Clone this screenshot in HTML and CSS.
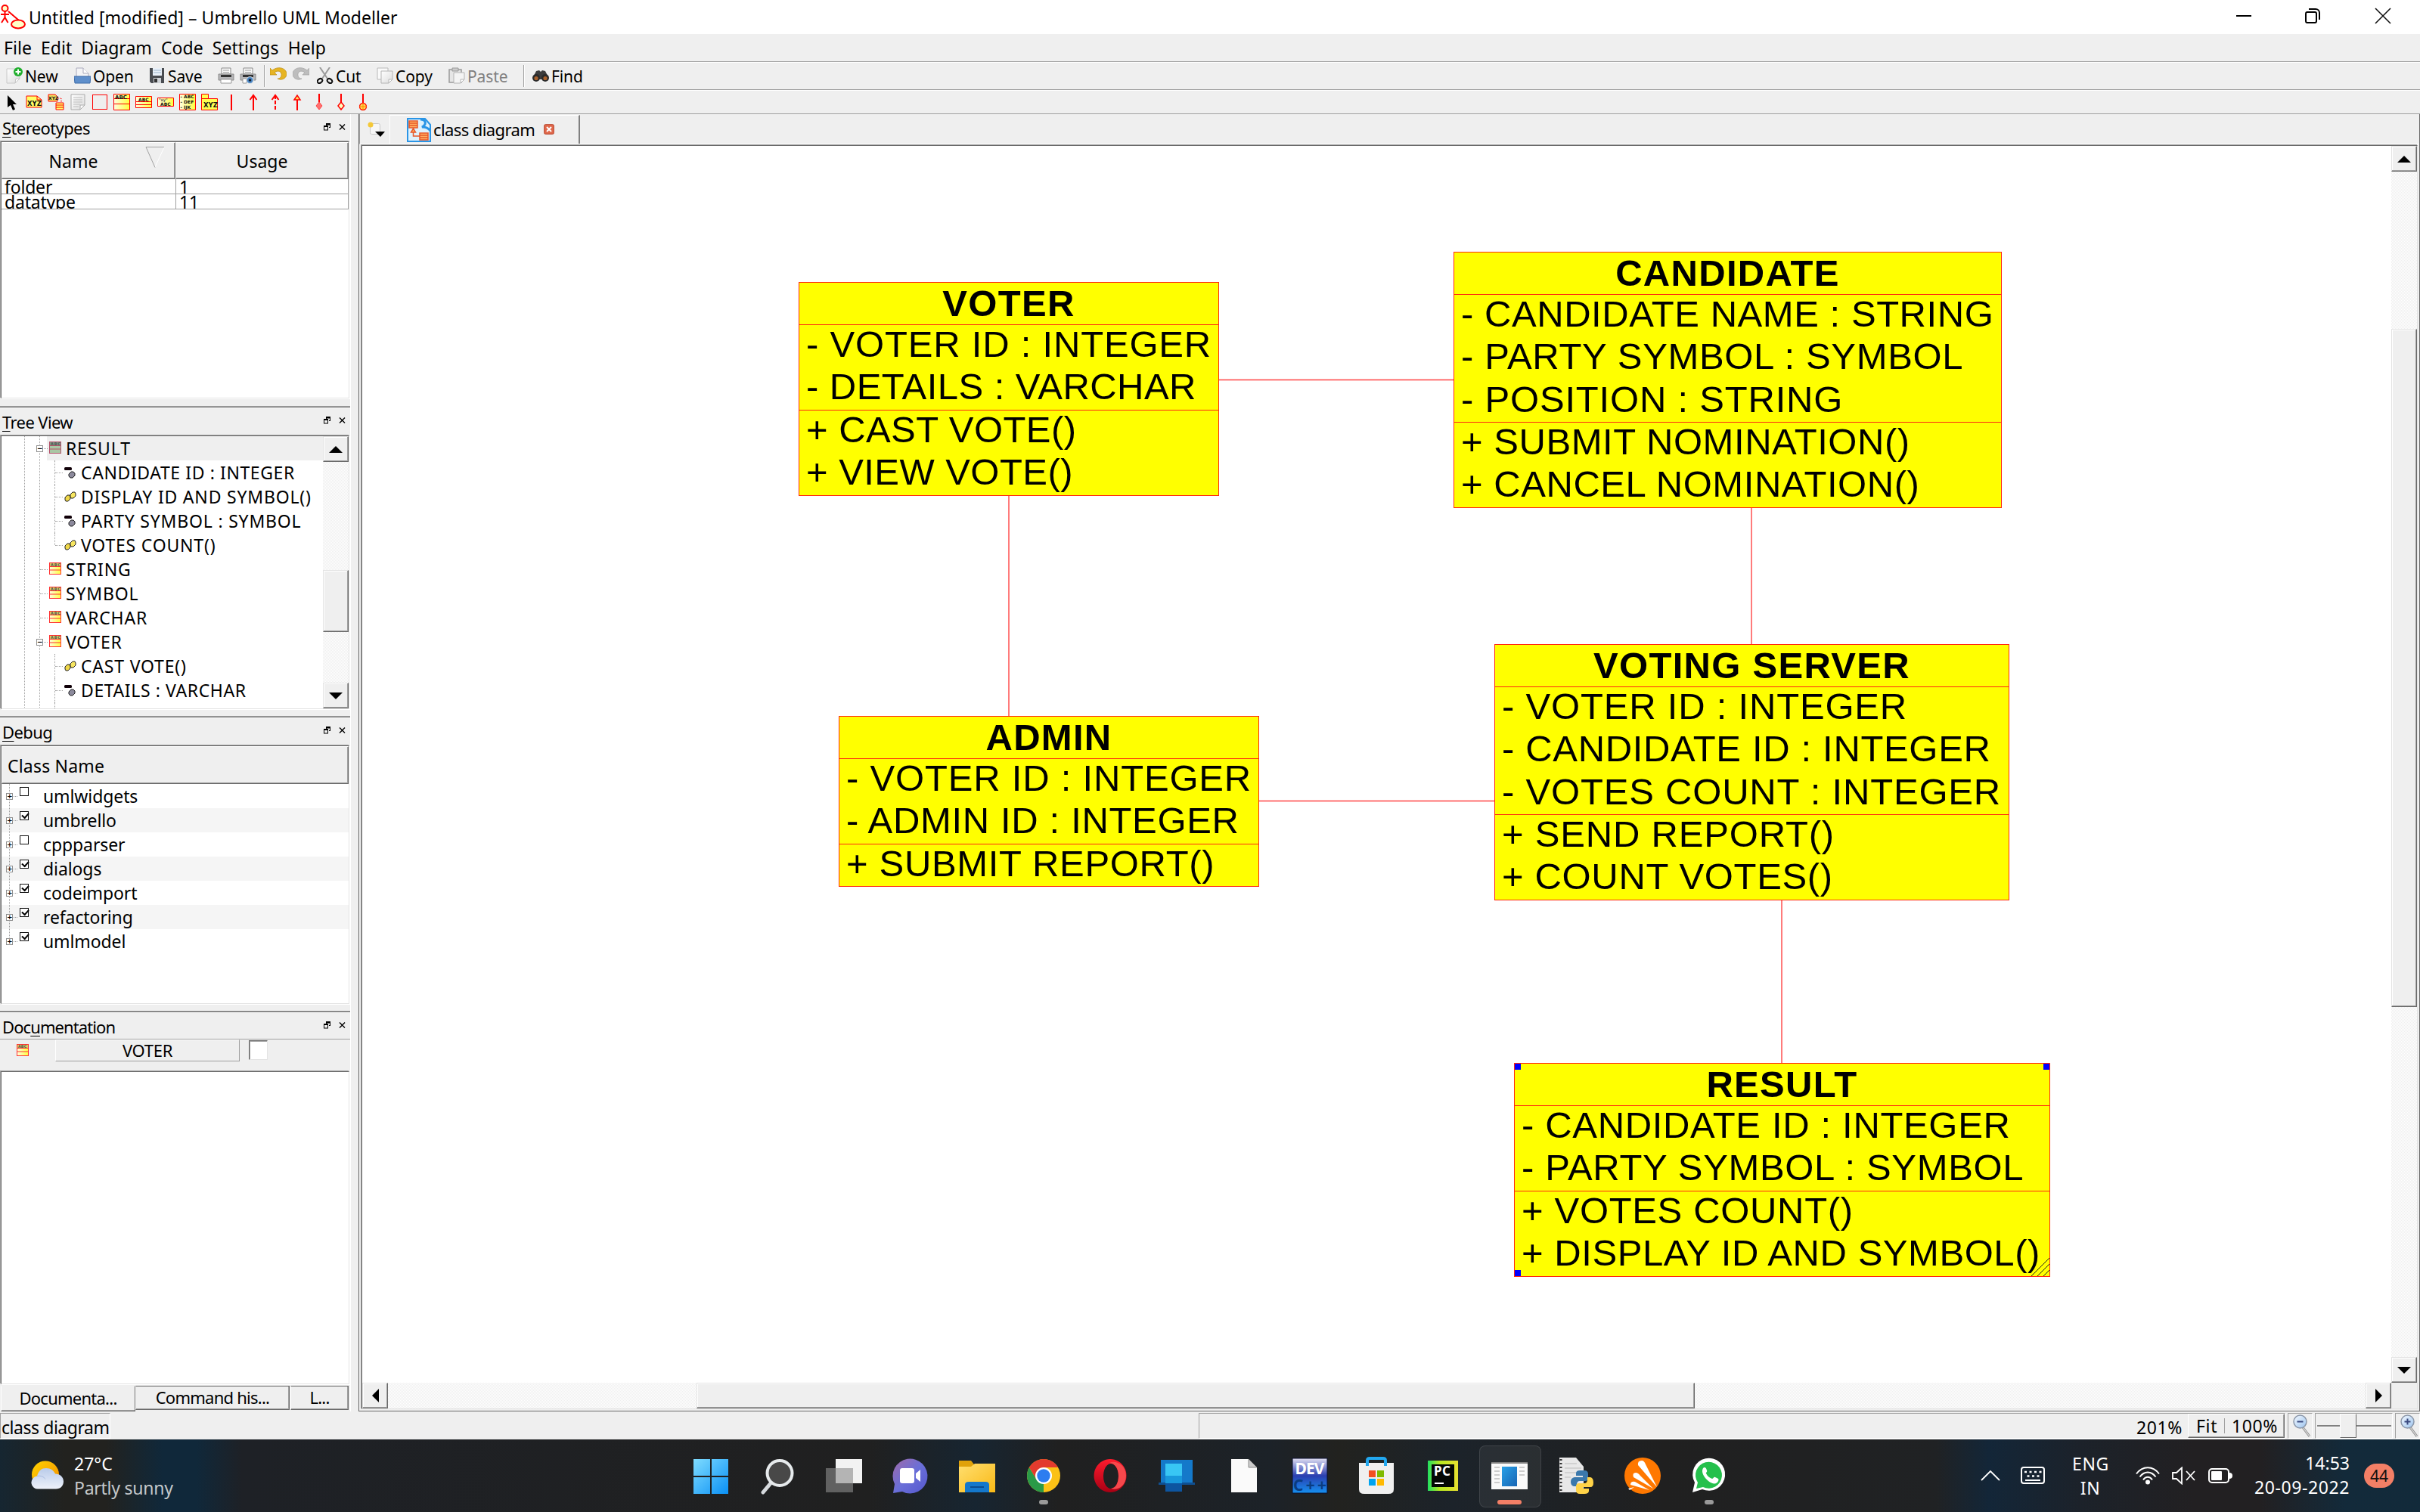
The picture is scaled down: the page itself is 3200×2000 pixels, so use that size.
FILE: index.html
```html
<!DOCTYPE html>
<html lang="en">
<head>
<meta charset="utf-8">
<title>Untitled [modified] – Umbrello UML Modeller</title>
<link rel="stylesheet" href="styles.css">
</head>
<body>
<svg class="defs" width="0" height="0">
  <defs>
    <linearGradient id="gYel" x1="0" y1="0" x2="1" y2="0"><stop offset="0" stop-color="#fffde0"/><stop offset="1" stop-color="#ffff3c"/></linearGradient>
    <linearGradient id="gPage" x1="0" y1="0" x2="1" y2="1"><stop offset="0" stop-color="#fff"/><stop offset="1" stop-color="#dcdcdc"/></linearGradient>
    <linearGradient id="gBlue" x1="0" y1="0" x2="1" y2="1"><stop offset="0" stop-color="#7fdcff"/><stop offset="1" stop-color="#0a90f5"/></linearGradient>
    <linearGradient id="gChat" x1="0" y1="0" x2="1" y2="1"><stop offset="0" stop-color="#a06aa8"/><stop offset=".5" stop-color="#6a6fd8"/><stop offset="1" stop-color="#5558cf"/></linearGradient>
    <linearGradient id="gFolder" x1="0" y1="0" x2="1" y2="1"><stop offset="0" stop-color="#ffdf70"/><stop offset="1" stop-color="#f9b916"/></linearGradient>
    <linearGradient id="gOpera" x1="0" y1="0" x2="0" y2="1"><stop offset="0" stop-color="#ff1b2d"/><stop offset="1" stop-color="#a70014"/></linearGradient>
    <linearGradient id="gDev" x1="0" y1="0" x2="0" y2="1"><stop offset="0" stop-color="#e0dff2"/><stop offset=".5" stop-color="#2b3fb0"/><stop offset="1" stop-color="#1590f0"/></linearGradient>
    <linearGradient id="gPc" x1="0" y1="0" x2="1" y2="0"><stop offset="0" stop-color="#20e060"/><stop offset=".4" stop-color="#b8e820"/><stop offset="1" stop-color="#e8e030"/></linearGradient>
    <linearGradient id="gWin" x1="0" y1="0" x2="1" y2="1"><stop offset="0" stop-color="#1c9be6"/><stop offset="1" stop-color="#0a5cb0"/></linearGradient>
    <linearGradient id="gSun" x1="0" y1="0" x2="1" y2="1"><stop offset="0" stop-color="#ffd400"/><stop offset="1" stop-color="#f28a00"/></linearGradient>
    <linearGradient id="gCloud" x1="0" y1="0" x2="0" y2="1"><stop offset="0" stop-color="#b9cbea"/><stop offset="1" stop-color="#eef2fa"/></linearGradient>
    <linearGradient id="gLens" x1="0" y1="0" x2="1" y2="1"><stop offset="0" stop-color="#f4f9ff"/><stop offset="1" stop-color="#9cc4ee"/></linearGradient>
  </defs>
  <symbol id="class" viewBox="0 0 16 16"><rect x=".5" y=".5" width="15" height="15" fill="url(#gYel)" stroke="#f33" /><rect x="1" y="1" width="14" height="4" fill="#d9cf60"/><text x="2" y="5" class="t5">ABC</text><path d="M0 5.5h16M0 10h16" stroke="#f33"/></symbol>
  <symbol id="class-sel" viewBox="0 0 16 16"><rect x=".5" y=".5" width="15" height="15" fill="#a9c7a4" stroke="#b4536b"/><rect x="1" y="1" width="14" height="4" fill="#7d9a86"/><text x="2" y="5" class="t5">ABC</text><path d="M0 5.5h16M0 10h16" stroke="#b4536b"/></symbol>
  <symbol id="attr" viewBox="0 0 16 16"><rect x="0" y="1" width="10" height="4" rx="1.5" fill="#100008"/><path d="M6 10l3-3h3l2 2v3l-3 3H8l-2-2z" fill="#8c8a9c" stroke="#222"/></symbol>
  <symbol id="op" viewBox="0 0 16 16"><path d="M1 9l3-3h3l1 2v3l-3 3H2l-1-2z" fill="#f0d84a" stroke="#222"/><path d="M8 5l3-3h3l1 2v3l-3 3H9L8 8z" fill="#f7e660" stroke="#222"/></symbol>
  <symbol id="float" viewBox="0 0 9 10"><path d="M3 0h6v6H7V5h1V2.500H4V3H3zM0 3h6v6.500H0zM1 5v3.500h4V5z" fill="#000" fill-rule="evenodd"/></symbol>
  <symbol id="x" viewBox="0 0 9 9"><path d="M1 1l7 7M8 1L1 8" stroke="#000" stroke-width="1.4"/></symbol>
</svg>

<div class="window">
  <header class="titlebar">
    <svg class="app" viewBox="0 0 34 34"><g fill="none" stroke="#f00" stroke-width="2"><circle cx="5.500" cy="5" r="4" fill="#ffffc8"/><path d="M5.500 9v9M0 13h11M5.500 17L1 24M5.500 17l4 7M10 9l14 12"/><ellipse cx="23" cy="26" rx="9" ry="5.500" fill="#ffffc8"/></g></svg>
    <h1>Untitled [modified] – Umbrello UML Modeller</h1>
    <svg class="winbtn min" viewBox="0 0 20 20"><path d="M0 10h20" stroke="#000" stroke-width="2"/></svg>
    <svg class="winbtn max" viewBox="0 0 20 20"><g fill="none" stroke="#000" stroke-width="2"><rect x="1" y="5" width="14" height="14" rx="2"/><path d="M5 1h9a5 5 0 0 1 5 5v9"/></g></svg>
    <svg class="winbtn" viewBox="0 0 20 20"><path d="M0 0l20 20M20 0L0 20" stroke="#111" stroke-width="1.600"/></svg>
  </header>
  <nav class="menu"><span>File</span><span>Edit</span><span>Diagram</span><span>Code</span><span>Settings</span><span>Help</span></nav>

  <div class="toolbar main">
    <div class="tool"><svg viewBox="0 0 22 22"><path d="M1 2h17v13l-6 6H1z" fill="url(#gPage)" stroke="#c8c8c8"/><path d="M12 21l1-6h5z" fill="#fff" stroke="#c4c4c4"/><circle cx="16" cy="6" r="6" fill="#1fae2c"/><path d="M16 2.500v7M12.500 6h7" stroke="#fff" stroke-width="2"/></svg><span>New</span></div>
    <div class="tool"><svg viewBox="0 0 22 22"><path d="M3 1h9l7 7v6H3z" fill="#f4f4f6" stroke="#aab"/><path d="M12 1v7h7" fill="#fff" stroke="#aab"/><path d="M0 12h22l-1 9H1z" fill="#5f8fcb" stroke="#3d6ba8"/></svg><span>Open</span></div>
    <div class="tool"><svg viewBox="0 0 22 22"><path d="M1 1h19v20H3l-2-2z" fill="#4a4d52" /><path d="M5 1h12v10H5z" fill="#e9f0f8"/><path d="M6 4h10M6 7h10" stroke="#9bb4cc"/><path d="M6 14h10v7H6z" fill="#cfd2d6"/><path d="M7 15h4v5H7z" fill="#333"/></svg><span>Save</span></div>
    <div class="tool"><svg viewBox="0 0 22 22"><path d="M5 1h12v8H5z" fill="#fafafa" stroke="#888"/><path d="M7 4h8M7 6.500h8" stroke="#999"/><path d="M1 9h20v8H1z" fill="#b6b6b8" stroke="#8a8a8a"/><path d="M4 10h14v3H4z" fill="#333"/><path d="M4 16h14v5H4z" fill="#fff" stroke="#999"/></svg></div>
    <div class="tool"><svg viewBox="0 0 22 22"><path d="M5 1h12v8H5z" fill="#fafafa" stroke="#888"/><path d="M7 4h8M7 6.500h8" stroke="#999"/><path d="M1 9h20v8H1z" fill="#b6b6b8" stroke="#8a8a8a"/><path d="M4 10h14v3H4z" fill="#333"/><path d="M4 15h5v6H4z" fill="#fff" stroke="#999"/><circle cx="13.500" cy="17" r="4.500" fill="#4b86c4" stroke="#e8e8e8"/><circle cx="13.500" cy="17" r="1.800" fill="#123"/></svg></div>
    <i class="sep"></i>
    <div class="tool"><svg viewBox="0 0 22 22"><path d="M0 1v9h9L6 7c5-4 10-1 9 4-.4 3-3 4-5 4 5 3 11 0 12-5C23 2 12-3 3 4z" fill="#e6b422" stroke="#b98a10" stroke-width=".7"/></svg></div>
    <div class="tool"><svg viewBox="0 0 22 22"><path d="M22 1v9h-9l3-3C11 3 6 6 7 11c.4 3 3 4 5 4-5 3-11 0-12-5C-1 2 10-3 19 4z" fill="#bdbdbd" stroke="#a0a0a0" stroke-width=".7"/></svg></div>
    <div class="tool"><svg viewBox="0 0 22 22"><path d="M4 0l10 15M17 0L7 15" stroke="#9a9a9a" stroke-width="2"/><g fill="none" stroke="#111" stroke-width="2"><ellipse cx="4" cy="18" rx="3.500" ry="2.600" transform="rotate(-35 4 18)"/><ellipse cx="17" cy="18" rx="3.500" ry="2.600" transform="rotate(35 17 18)"/></g></svg><span>Cut</span></div>
    <div class="tool"><svg viewBox="0 0 22 22"><path d="M1 1h14v15H1z" fill="#fafafa" stroke="#b8b8b8"/><path d="M6 5h15v11l-5 5H6z" fill="url(#gPage)" stroke="#b4b4b4"/><path d="M16 21v-5h5z" fill="#fff" stroke="#b4b4b4"/></svg><span>Copy</span></div>
    <div class="tool off"><svg viewBox="0 0 22 22"><path d="M1 3h16v17H1z" fill="#e6e6e6" stroke="#9a9a9a" stroke-width="1.500"/><path d="M5 1h8v4H5z" fill="#ccc" stroke="#999"/><path d="M7 7h14v9l-5 5H7z" fill="#f4f4f4" stroke="#b4b4b4"/><path d="M16 21v-5h5z" fill="#fff" stroke="#b4b4b4"/></svg><span>Paste</span></div>
    <i class="sep"></i>
    <div class="tool"><svg viewBox="0 0 22 22"><path d="M5 5l4-1 2 2 2-2 4 1 4 8v3H1v-3z" fill="#3c3c3c"/><circle cx="5" cy="14" r="5" fill="#2b2b2b"/><circle cx="17" cy="14" r="5" fill="#2b2b2b"/><circle cx="5" cy="14.500" r="2.600" fill="#a8612c"/><circle cx="17" cy="14.500" r="2.600" fill="#a8612c"/></svg><span>Find</span></div>
  </div>

  <div class="toolbar shapes">
    <svg viewBox="0 0 22 22"><path d="M5 2v16l4-3 3 7 3-1.500-3-6.500h5z" fill="#000"/></svg>
    <svg viewBox="0 0 22 22"><path d="M1 3h14l6 5v10H1z" fill="#ffff66" stroke="#f00"/><path d="M15 3v5h6" fill="none" stroke="#f00"/><text x="2" y="16" class="t8">XYZ</text></svg>
    <svg viewBox="0 0 22 22"><path d="M1 1h9l3 3v6H1z" fill="#f0e060" stroke="#f00"/><text x="1" y="8" class="t6">XYZ</text><path d="M14 6h4v6" fill="none" stroke="#f00" stroke-dasharray="1 1"/><path d="M11 12h10v9H11zM11 15h10M11 18h10" fill="#ffff66" stroke="#f00"/></svg>
    <svg viewBox="0 0 22 22"><path d="M2 1h18v14l-6 6H2z" fill="url(#gPage)" stroke="#aaa"/><path d="M5 5h12M5 8h12M5 11h12M5 14h9M5 17h7" stroke="#bbb"/><path d="M14 21v-6h6z" fill="#fff" stroke="#aaa"/></svg>
    <svg viewBox="0 0 22 22"><rect x="1.500" y="1.500" width="19" height="19" fill="none" stroke="#f00"/></svg>
    <svg viewBox="0 0 22 22"><path d="M.5.5h21v21H.5z" fill="url(#gYel)" stroke="#f00"/><path d="M.5 6.500h21M.5 13.500h21" stroke="#f00"/><text x="2" y="6.500" class="t7">ABC</text></svg>
    <svg viewBox="0 0 22 22"><path d="M.5 3.500h21v15H.5z" fill="url(#gYel)" stroke="#f00"/><path d="M.5 10.500h21M.5 14.500h21" stroke="#f00"/><text x="4" y="9.500" class="t6">ABC</text></svg>
    <svg viewBox="0 0 22 22"><path d="M.5 5.500h21v11H.5z" fill="url(#gYel)" stroke="#f00"/><text x="2" y="9.500" class="t5">"xy"</text><text x="4" y="15.500" class="t6">ABC</text></svg>
    <svg viewBox="0 0 22 22"><path d="M.5.5h21v21H.5z" fill="url(#gYel)" stroke="#f00"/><text x="1.500" y="6" class="t6">- ABC</text><text x="1.500" y="13" class="t6">- DEF</text><text x="1.500" y="19.500" class="t6">- IJK</text></svg>
    <svg viewBox="0 0 22 22"><path d="M.5.5h9v6h12v15H.5zM.5 6.500h9" fill="#ffff50" stroke="#f00"/><text x="3" y="18" class="t8">XYZ</text></svg>
    <svg viewBox="0 0 22 22"><path d="M11 1v21" stroke="#f00" stroke-width="2"/></svg>
    <svg viewBox="0 0 22 22"><path d="M11 2v20M6.500 8L11 2l4.500 6" fill="none" stroke="#f00" stroke-width="2"/></svg>
    <svg viewBox="0 0 22 22"><path d="M11 2v20" stroke="#f00" stroke-width="2" stroke-dasharray="5 2"/><path d="M6.500 8L11 2l4.500 6" fill="none" stroke="#f00" stroke-width="2"/></svg>
    <svg viewBox="0 0 22 22"><path d="M11 8v14" stroke="#f00" stroke-width="2"/><path d="M7 8l4-6 4 6z" fill="#ffe060" stroke="#f00" stroke-width="1.500"/></svg>
    <svg viewBox="0 0 22 22"><path d="M11 0v12" stroke="#f00" stroke-width="2"/><path d="M11 11l4 5-4 5-4-5z" fill="#ff7070" stroke="#f44"/></svg>
    <svg viewBox="0 0 22 22"><path d="M11 0v12" stroke="#f00" stroke-width="2"/><path d="M11 11l4 5-4 5-4-5z" fill="#ffffc0" stroke="#f00" stroke-width="1.500"/></svg>
    <svg viewBox="0 0 22 22"><path d="M11 0v12" stroke="#f00" stroke-width="2"/><circle cx="11" cy="17" r="4.500" fill="#ffd850" stroke="#f00" stroke-width="1.300"/><path d="M11 12v10M6 17h10" stroke="#f80"/></svg>
  </div>

  <div class="body">
    <aside class="docks">
      <section class="dock stereo">
        <h2 class="dock-title"><span><u>S</u>tereotypes</span><svg><use href="#float"/></svg><svg><use href="#x"/></svg></h2>
        <div class="frame">
          <div class="grid-head"><span class="hd">Name<svg class="sort" viewBox="0 0 26 28"><path d="M25 1L13 27" stroke="#fff" fill="none"/><path d="M25 .5H1l12 27" stroke="#a0a0a0" fill="none"/></svg></span><span class="hd">Usage</span></div>
          <div class="grid-row"><span>folder</span><span>1</span></div>
          <div class="grid-row"><span>datatype</span><span>11</span></div>
        </div>
      </section>

      <section class="dock treeview">
        <h2 class="dock-title"><span><u>T</u>ree View</span><svg><use href="#float"/></svg><svg><use href="#x"/></svg></h2>
        <div class="frame split">
          <ul class="tree">
            <li class="cls sel"><b class="pm">−</b><svg><use href="#class-sel"/></svg><span>RESULT</span></li>
            <li class="mem"><svg><use href="#attr"/></svg><span class="n">CANDIDATE ID : INTEGER</span></li>
            <li class="mem"><svg><use href="#op"/></svg><span>DISPLAY ID AND SYMBOL()</span></li>
            <li class="mem"><svg><use href="#attr"/></svg><span>PARTY SYMBOL : SYMBOL</span></li>
            <li class="mem last"><svg><use href="#op"/></svg><span>VOTES COUNT()</span></li>
            <li class="cls"><svg><use href="#class"/></svg><span>STRING</span></li>
            <li class="cls"><svg><use href="#class"/></svg><span>SYMBOL</span></li>
            <li class="cls"><svg><use href="#class"/></svg><span>VARCHAR</span></li>
            <li class="cls"><b class="pm">−</b><svg><use href="#class"/></svg><span>VOTER</span></li>
            <li class="mem"><svg><use href="#op"/></svg><span>CAST VOTE()</span></li>
            <li class="mem"><svg><use href="#attr"/></svg><span class="n">DETAILS : VARCHAR</span></li>
            <li class="mem"><span class="noicon">VIEW VOTE()</span></li>
          </ul>
          <div class="vbar tree-bar"><i class="btn"><em class="up"></em></i><i class="thumb"></i><i class="btn end"><em class="down"></em></i></div>
        </div>
      </section>

      <section class="dock debug">
        <h2 class="dock-title"><span><u>D</u>ebug</span><svg><use href="#float"/></svg><svg><use href="#x"/></svg></h2>
        <div class="frame">
          <div class="hd wide">Class Name</div>
          <ul class="checks">
            <li><b class="pm">+</b><i class="box"></i>umlwidgets</li>
            <li><b class="pm">+</b><i class="box on"></i>umbrello</li>
            <li><b class="pm">+</b><i class="box"></i>cppparser</li>
            <li><b class="pm">+</b><i class="box on"></i>dialogs</li>
            <li><b class="pm">+</b><i class="box on"></i>codeimport</li>
            <li><b class="pm">+</b><i class="box on"></i>refactoring</li>
            <li><b class="pm">+</b><i class="box on"></i>umlmodel</li>
          </ul>
        </div>
      </section>

      <section class="dock docs">
        <h2 class="dock-title"><span>Doc<u>u</u>mentation</span><svg><use href="#float"/></svg><svg><use href="#x"/></svg></h2>
        <div class="docrow"><svg><use href="#class"/></svg><span class="docname">VOTER</span><i class="doccheck"></i></div>
        <div class="frame"></div>
        <div class="docktabs"><span class="cur">Documenta...</span><span class="t2">Command his...</span><span class="t3">L...</span></div>
      </section>
    </aside>

    <main class="center">
      <div class="tabs">
        <svg class="newtab" viewBox="0 0 24 22"><rect x="3.500" y="2.500" width="13" height="14" rx="2" fill="#f7f7f7" stroke="#c8c8c8"/><circle cx="4" cy="4" r="3.500" fill="#f4c838"/><path d="M10 13h13l-6 7z" fill="#000"/></svg>
        <div class="tab">
          <svg viewBox="0 0 32 32"><path d="M1 1h23l7 8v22H1z" fill="#dff1fc" stroke="#2a95e6" stroke-width="2"/><path d="M18 2c8 0 8 7 2 10 5 0 9 2 11 5" fill="none" stroke="#2a95e6" stroke-width="3"/><g fill="#ffb060" stroke="#e8582a" stroke-width="1.500"><path d="M3 4h11v9H3zM3 7h11M3 10h11M17 20h11v9H17zM17 23h11M17 26h11M8.500 14l3 5h-6z"/></g><path d="M8.500 19v5H17" fill="none" stroke="#e8582a" stroke-width="1.500"/></svg>
          <span>class diagram</span>
          <svg class="close" viewBox="0 0 14 14"><rect x=".7" y=".7" width="12.600" height="12.600" rx="1.500" fill="#e0694c" stroke="#b84028"/><path d="M4 4l6 6M10 4l-6 6" stroke="#fff" stroke-width="2"/></svg>
        </div>
      </div>
      <div class="view">
        <div class="canvas">
          <svg class="links" viewBox="479 193 2683 1636"><g stroke="#f44" stroke-width="1.400" fill="none"><path d="M1612 502.500H1922M1334 655V947M1665 1059.500H1976M2316 672V852M2356 1190V1406"/></g></svg>
          <article class="uml voter"><h3>VOTER</h3><p class="w">- VOTER ID : INTEGER</p><p class="k">- DETAILS : VARCHAR</p><div class="ops"><p class="k">+ CAST VOTE()</p><p class="k">+ VIEW VOTE()</p></div></article>
          <article class="uml candidate"><h3>CANDIDATE</h3><p class="c">- CANDIDATE NAME : STRING</p><p>- PARTY SYMBOL : SYMBOL</p><p class="w">- POSITION : STRING</p><div class="ops"><p class="c">+ SUBMIT NOMINATION()</p><p class="c">+ CANCEL NOMINATION()</p></div></article>
          <article class="uml admin"><h3>ADMIN</h3><p class="w">- VOTER ID : INTEGER</p><p>- ADMIN ID : INTEGER</p><div class="ops"><p>+ SUBMIT REPORT()</p></div></article>
          <article class="uml server"><h3>VOTING SERVER</h3><p class="w">- VOTER ID : INTEGER</p><p>- CANDIDATE ID : INTEGER</p><p class="w">- VOTES COUNT : INTEGER</p><div class="ops"><p class="w">+ SEND REPORT()</p><p>+ COUNT VOTES()</p></div></article>
          <article class="uml result"><h3>RESULT</h3><p>- CANDIDATE ID : INTEGER</p><p>- PARTY SYMBOL : SYMBOL</p><div class="ops"><p>+ VOTES COUNT()</p><p class="c">+ DISPLAY ID AND SYMBOL()</p></div><i class="h tl"></i><i class="h tr"></i><i class="h bl"></i><svg class="grip" viewBox="0 0 24 24"><path d="M0 24L24 0M8 24L24 8M16 24l8-8" stroke="#222"/></svg></article>
        </div>
        <div class="vbar canvas-v"><i class="btn"><em class="up"></em></i><i class="thumb"></i><i class="btn end"><em class="down"></em></i></div>
        <div class="hbar"><i class="btn"><em class="left"></em></i><i class="thumb"></i><i class="btn end"><em class="right"></em></i></div>
        <div class="corner"></div>
      </div>
    </main>
  </div>

  <footer class="status">
    <span class="cell name">class diagram</span>
    <span class="cell zoom"><span class="pct">201%</span><span class="fit"><span>Fit</span><i></i><span>100%</span></span></span>
    <span class="cell mag"><svg viewBox="0 0 24 30"><path d="M13 17l9 12" stroke="#999" stroke-width="3"/><path d="M13 17l9 12" stroke="#eee"/><circle cx="9.500" cy="9.500" r="8.500" fill="url(#gLens)" stroke="#8a96a8" stroke-width="1.500"/><path d="M5.500 9.500h8" stroke="#3a4a80" stroke-width="2"/></svg></span>
    <span class="cell slider"><i></i></span>
    <span class="cell mag"><svg viewBox="0 0 24 30"><path d="M13 17l9 12" stroke="#999" stroke-width="3"/><path d="M13 17l9 12" stroke="#eee"/><circle cx="9.500" cy="9.500" r="8.500" fill="url(#gLens)" stroke="#8a96a8" stroke-width="1.500"/><path d="M5.500 9.500h8M9.500 5.500v8" stroke="#3a4a80" stroke-width="2"/></svg></span>
  </footer>
</div>

<div class="taskbar">
  <div class="weather">
    <svg viewBox="0 0 44 38"><circle cx="20" cy="18.500" r="18" fill="url(#gSun)"/><path d="M11 37.500a8.500 8.500 0 0 1-2-17C11 13 15 10 21 10s10 3 12 7.500c6 0 11 4 11 10s-4 10-10 10z" fill="url(#gCloud)"/><path d="M9 20.500c5-1 9 1 11 4" fill="none" stroke="#a9bce0"/></svg>
    <div><span>27°C</span><span class="dim">Partly sunny</span></div>
  </div>
  <div class="apps">
    <span><svg viewBox="0 0 48 48"><path d="M1 2h22v22H1zM25 2h22v22H25zM1 26h22v22H1zM25 26h22v22H25z" fill="url(#gBlue)"/></svg></span>
    <span><svg viewBox="0 0 48 48"><path d="M15 34L5 46" stroke="#d6dade" stroke-width="5" stroke-linecap="round"/><circle cx="27" cy="20.500" r="16.500" fill="#484848" stroke="#e6eaec" stroke-width="4"/></svg></span>
    <span><svg viewBox="0 0 48 48"><path d="M13 2h35v32H13z" fill="#f2f2f2"/><path d="M0 14h36v32H0z" fill="#777" fill-opacity=".75"/><path d="M13 14h23v20H13z" fill="#b4b4b4"/></svg></span>
    <span><svg viewBox="0 0 48 48"><path d="M1 47l2-12A23 23 0 1 1 13 45z" fill="url(#gChat)"/><rect x="10" y="14" width="19" height="20" rx="3" fill="#fff"/><path d="M31 21l6-5v16l-6-5z" fill="#fff"/></svg></span>
    <span><svg viewBox="0 0 48 48"><path d="M0 4h16l4 5v8H0z" fill="#e0a20a"/><path d="M0 12h16l5-4h27v38H0z" fill="url(#gFolder)"/><path d="M8 46V36q0-4 5-4h22q5 0 5 4v10z" fill="#1478cc"/><path d="M15 39h18" stroke="#0a4c90" stroke-width="2"/></svg></span>
    <span class="run"><svg viewBox="0 0 48 48"><circle cx="24" cy="24" r="22" fill="#fbc116"/><path d="M24 24L24 46A22 22 0 0 1 5 13L14 28z" fill="#2a9a48"/><path d="M5 13a22 22 0 0 1 38.100 0H24L14 28z" fill="#e33b2e"/><circle cx="24" cy="24" r="11" fill="#fff"/><circle cx="24" cy="24" r="8.700" fill="#2c7df0"/></svg></span>
    <span><svg viewBox="0 0 48 48"><path fill-rule="evenodd" d="M24 2a21.500 22 0 1 0 .1 0zM25 8a10 16.500 0 1 1-.1 0z" fill="url(#gOpera)"/><path d="M23 7c8-4 22 2 22 17S32 44 25 41c7-1 10-8 10-17S31 8 23 7z" fill="#f6484c"/></svg></span>
    <span><svg viewBox="0 0 48 48"><path d="M3 3h42v30H3z" fill="#1479ca"/><path d="M0 33h48v3H0z" fill="#0f4f90"/><path d="M9 8h22v37H9z" fill="#1898dc"/><path d="M9 8h22v16H9z" fill="#38c6f4"/><path d="M9 34h22v11H9z" fill="#0d55a0"/></svg></span>
    <span><svg viewBox="0 0 48 48"><path d="M8 2h23l11 11v33H8z" fill="#fafafa"/><path d="M31 2v11h11z" fill="#ccc" stroke="#888"/></svg></span>
    <span><svg viewBox="0 0 48 48"><rect x="1" y="1" width="46" height="46" fill="url(#gDev)" stroke="#0a1030"/><text x="24" y="22" class="dev" textLength="39">DEV</text><text x="24" y="44" class="dev cpp" textLength="44">C++</text></svg></span>
    <span><svg viewBox="0 0 48 48"><path d="M12 11V4q0-3 3-3h18q3 0 3 3v7" fill="none" stroke="#22a8f0" stroke-width="4"/><path d="M1 7h46v35q0 6-7 6H8q-7 0-7-6z" fill="#f0f0f0"/><path d="M12 11V5M36 11V5" stroke="#22a8f0" stroke-width="4"/><path d="M14 17h9v9h-9z" fill="#f25022"/><path d="M25 17h9v9h-9z" fill="#7fba00"/><path d="M14 28h9v9h-9z" fill="#00a4ef"/><path d="M25 28h9v9h-9z" fill="#ffb900"/></svg></span>
    <span><svg viewBox="0 0 48 48"><path d="M4 4h40v40H4z" fill="url(#gPc)"/><path d="M9 9h30v30H9z" fill="#050805"/><text x="12" y="24" class="pc" textLength="22">PC</text><path d="M13 34h12" stroke="#fff" stroke-width="2"/></svg></span>
    <span class="focus"><svg viewBox="0 0 48 48"><path d="M0 6h48v36H0z" fill="#fafafa"/><path d="M0 6h48v2H0z" fill="#777"/><path d="M14 12h20v26H14z" fill="url(#gWin)"/><path d="M4 13h7M4 18h7M4 23h7M4 28h7M4 33h7M37 13h7M37 18h7M37 23h7" stroke="#999"/></svg></span>
    <span><svg viewBox="0 0 48 48"><path d="M2 0h22l10 12v34H2z" fill="#e8e8e8"/><path d="M4 2v42" stroke="#333" stroke-width="3" stroke-dasharray="2 3"/><path d="M9 8h16M9 14h22M9 20h20M9 26h8" stroke="#bbb"/><path d="M29 17h6q5 0 5 5v5q0 4-4 4h-7q-4 0-4 5v2h-4q-4-1-4-6t5-6h11v-2h-9v-3q0-4 5-4z" fill="#3a78ac"/><path d="M35 48h-6q-5 0-5-5v-5q0-4 4-4h7q4 0 4-5v-3h4q4 1 4 7t-4 6H33v2h8v3q0 4-6 4z" fill="#ffd348"/></svg></span>
    <span><svg viewBox="0 0 48 48"><circle cx="24" cy="24" r="24" fill="#ff7800"/><path d="M43 39L18 10q-1-6 5-6 3 0 5 5zM38 41L12 26q-2-6 3-6 3 0 6 4zM33 43L8 36q0-5 6-4zM5 41l8-2-6 4z" fill="#fff"/></svg></span>
    <span class="run"><svg viewBox="0 0 48 48"><path d="M2 46l3-13A21.500 21.500 0 1 1 15 42z" fill="#fff"/><path d="M7 41l2-8a17.500 17.500 0 1 1 7 6z" fill="#25c04c"/><path d="M16 14c2-2 4-1 5 3 1 2-2 3-1 4 2 4 5 6 8 7 2 0 2-3 4-2 5 2 5 3 4 5-2 5-8 4-13 0-6-5-10-12-7-17z" fill="#fff"/></svg></span>
  </div>
  <div class="tray">
    <svg class="chev" viewBox="0 0 26 14"><path d="M1 13L13 1l12 12" fill="none" stroke="#fff" stroke-width="1.800"/></svg>
    <svg class="kbd" viewBox="0 0 32 24"><rect x="1" y="1" width="30" height="21" rx="3" fill="none" stroke="#fff" stroke-width="2"/><path d="M5 7h23" stroke="#fff" stroke-width="2.500" stroke-dasharray="3 3.500"/><path d="M8.500 12.500h16" stroke="#fff" stroke-width="2.500" stroke-dasharray="3 3.500"/><path d="M6 18h20" stroke="#fff" stroke-width="2"/></svg>
    <div class="lang"><span>ENG</span><span>IN</span></div>
    <svg class="wifi" viewBox="0 0 32 24"><g fill="none" stroke="#fff" stroke-width="2"><path d="M1 9.500C9-1.500 23-1.500 31 9.500M5.500 13.500c6-8 15-8 21 0M10 17.500c3.500-5 8.500-5 12 0"/></g><circle cx="16" cy="20.500" r="3" fill="#fff"/></svg>
    <svg class="vol" viewBox="0 0 31 24"><path d="M1 8h5l7-6.500v21L6 16H1z" fill="none" stroke="#fff" stroke-width="1.800"/><path d="M19 6l11 12M30 6L19 18" stroke="#fff" stroke-width="1.800"/></svg>
    <svg class="bat" viewBox="0 0 32 22"><rect x="1" y="2" width="26" height="18" rx="4" fill="none" stroke="#fff" stroke-width="2"/><rect x="4" y="5" width="14" height="12" rx="1" fill="#fff"/><path d="M28 7q4 0 4 4t-4 4z" fill="#fff"/></svg>
    <div class="clock"><span>14:53</span><span class="date">20-09-2022</span></div>
    <span class="badge">44</span>
  </div>
</div>
</body>
</html>
```
FILE: styles.css
```css
* { box-sizing: border-box; }
html, body { margin: 0; width: 3200px; height: 2000px; overflow: hidden; }
body { font: 23px/32px "Noto Sans", "Open Sans", sans-serif; color: #000; background: #efefef; display: flex; flex-direction: column; }
h1, h2, h3, p, ul { margin: 0; padding: 0; font-weight: normal; font-size: inherit; }
ul { list-style: none; }
svg { display: block; flex: none; }
i, em, b { font-style: normal; }
.defs { position: absolute; }
.t5, .t6, .t7, .t8 { font-family: "DejaVu Sans", sans-serif; font-weight: bold; fill: #111; }
.t5 { font-size: 5px; fill: #555; }
.t6 { font-size: 6px; }
.t7 { font-size: 7px; }
.t8 { font-size: 8.500px; }

.window { height: 1904px; display: flex; flex-direction: column; background: #efefef; }

.titlebar { height: 45px; flex: none; background: #fff; display: flex; align-items: center; padding: 0 39px 3px 1px; }
.app { width: 34px; height: 34px; margin-top: 4px; }
h1 { flex: 1; margin-left: 3px; padding-top: 4px; white-space: nowrap; letter-spacing: .04px; }
.winbtn { width: 20px; height: 20px; overflow: visible; margin-left: 73px; }
.winbtn.max { margin-left: 71px; }

.menu { height: 37px; flex: none; display: flex; gap: 12px; padding: 2px 0 0 5px; border-bottom: 1px solid #a0a0a0; }
.menu span { letter-spacing: .05px; }

.toolbar { flex: none; border-top: 1px solid #fff; border-bottom: 1px solid #a0a0a0; align-items: center; }
.main { height: 37px; display: grid; grid-template-columns: 90px 99px 91px 29px 32px 8px 30px 32px 79px 95px 99px 12px 80px; padding-left: 8px; }
.tool { display: flex; align-items: center; gap: 3px; font-size: 21px; letter-spacing: -.1px; margin-top: -1px; }
.tool svg { width: 22px; height: 22px; }
.tool span { padding-top: 1px; }
.off { color: #808080; }
.sep { width: 2px; height: 29px; border-left: 1px solid #a0a0a0; border-right: 1px solid #fff; }
.shapes { height: 32px; display: flex; gap: 7px; padding: 0 0 1px 5px; }
.shapes svg { width: 22px; height: 22px; overflow: visible; }

.body { height: 1716px; flex: none; display: flex; }
.docks { width: 464px; display: flex; flex-direction: column; border-right: 1px solid #fff; }
.dock { display: flex; flex-direction: column; border-top: 1px solid #696969; box-shadow: inset 0 1px #fff, 0 -1px #a0a0a0; padding-top: 2px; }
.dock-title { height: 33px; flex: none; display: flex; align-items: center; font-size: 22px; letter-spacing: -.6px; padding: 0 5px 0 3px; }
.dock-title span { flex: 1; }
.dock-title u { text-underline-offset: 3px; text-decoration-thickness: 1px; text-decoration-skip-ink: none; }
.dock-title svg { width: 9px; height: 10px; margin: -3px 1px 0 10px; }
.frame { margin: 2px 1px 0 1px; background: #fff; border: 1px solid; border-color: #696969 #e3e3e3 #e3e3e3 #696969; box-shadow: -1px -1px #a0a0a0, 1px 1px #fff; overflow: hidden; }

.stereo { height: 387px; border-top: 0; box-shadow: none; padding-top: 0; }
.stereo .dock-title { height: 34px; padding-top: 2px; }
.stereo .frame { height: 340px; }
.hd { background: #efefef; border: 1px solid; border-color: #fff #696969 #696969 #fff; box-shadow: inset -1px -1px #a0a0a0; height: 49px; display: flex; align-items: center; justify-content: center; padding-top: 1px; position: relative; }
.grid-head, .grid-row { display: grid; grid-template-columns: 230px 229px; }
.grid-head .hd:first-child { padding-right: 40px; }
.sort { position: absolute; width: 26px; height: 28px; left: 189px; top: 5px; }
.grid-row { height: 20px; border-bottom: 1px solid #a0a0a0; line-height: 20px; width: 459px; border-right: 1px solid #a0a0a0; }
.grid-row span { height: 19px; overflow: hidden; padding-left: 4px; letter-spacing: -.2px; }
.grid-row span + span { border-left: 1px solid #a0a0a0; }

.treeview { height: 410px; }
.treeview .frame { height: 362px; }
.split { display: flex; }
.tree { width: 426px; letter-spacing: .8px; background: repeating-linear-gradient(#a0a0a0 0 1px, transparent 1px 2px) 30px 0 / 1px 100% no-repeat, repeating-linear-gradient(#a0a0a0 0 1px, transparent 1px 2px) 50px 0 / 1px 100% no-repeat; }
.tree li { height: 32px; display: flex; align-items: center; position: relative; white-space: nowrap; line-height: 34px; }
.tree li svg { width: 16px; height: 16px; }
.tree .n { letter-spacing: .6px; }
.tree .cls { padding-left: 63px; gap: 6px; }
.tree .sel { background: linear-gradient(#efefef, #efefef) 60px 0 / 366px 32px no-repeat; }
.tree .mem { padding-left: 83px; gap: 6px; }
.tree .cls svg { margin-top: -2px; }
.tree li::before { content: ""; position: absolute; left: 51px; width: 10px; top: 16px; border-top: 1px dotted #a0a0a0; }
.tree .mem::before { left: 71px; }
.tree .mem::after { content: ""; position: absolute; left: 70px; top: 0; height: 32px; border-left: 1px dotted #a0a0a0; }
.tree .mem.last::after { height: 16px; }
.noicon { padding-left: 22px; }
.pm { position: absolute; left: 46px; top: 12px; width: 9px; height: 9px; border: 1px solid #909090; background: #fff; font: bold 9px/7px "DejaVu Sans", sans-serif; letter-spacing: 0; text-align: center; z-index: 1; }

.btn, .thumb { display: flex; align-items: center; justify-content: center; background: #efefef; border: 1px solid; border-color: #e3e3e3 #696969 #696969 #e3e3e3; box-shadow: inset -1px -1px #a0a0a0, inset 1px 1px #fff; flex: none; }
.btn { width: 34px; height: 34px; }
.btn em { border: 9px solid transparent; }
.btn .up { border-bottom-color: #000; border-top: 0; }
.btn .down { border-top-color: #000; border-bottom: 0; }
.btn .left { border-right-color: #000; border-left: 0; }
.btn .right { border-left-color: #000; border-right: 0; }
.vbar, .hbar { display: flex; background: repeating-conic-gradient(#fff 0 25%, #efefef 0 50%) 0 0 / 2px 2px; }
.vbar { width: 34px; flex-direction: column; }
.end { margin-top: auto; }
.hbar .end { margin: 0 0 0 auto; }
.tree-bar .thumb { height: 82px; margin-top: 143px; }

.debug { height: 390px; }
.debug .frame { height: 342px; }
.wide { justify-content: flex-start; padding-left: 7px; width: 459px; height: 50px; letter-spacing: .2px; }
.checks { background: repeating-linear-gradient(#a0a0a0 0 1px, transparent 1px 2px) 10px 0 / 1px 210px no-repeat; }
.checks li { height: 32px; padding-left: 55px; line-height: 32px; position: relative; letter-spacing: -.1px; }
.checks li:nth-child(even) { background: rgba(0, 0, 0, .04); }
.checks .pm { left: 6px; }
.checks li::before { content: ""; position: absolute; left: 14px; width: 7px; top: 16px; border-top: 1px dotted #a0a0a0; }
.box { position: absolute; left: 24px; top: 4px; width: 12px; height: 12px; border: 1px solid #111; background: #fff; }
.box.on::after { content: ""; position: absolute; left: 2px; top: 1px; width: 7px; height: 4px; border: solid #000; border-width: 0 0 2px 2px; transform: rotate(-48deg); }

.docs { height: 529px; }
.docs .dock-title { letter-spacing: -.9px; }
.docrow { height: 41px; display: flex; border-top: 1px solid #a0a0a0; padding-left: 22px; flex: none; }
.docrow svg { width: 16px; height: 16px; margin-top: 6px; }
.docname { width: 244px; height: 29px; margin-left: 35px; text-align: center; font-size: 22px; letter-spacing: -.3px; line-height: 27px; border: 1px solid; border-color: #fff #a0a0a0 #a0a0a0 #fff; }
.doccheck { width: 25px; height: 26px; margin: 1px 0 0 12px; background: #fff; border: 1px solid; border-color: #696969 #e3e3e3 #e3e3e3 #696969; box-shadow: inset 1px 1px #a0a0a0; }
.docs .frame { height: 414px; flex: none; }
.docktabs { display: flex; font-size: 22px; letter-spacing: -.75px; padding: 2px 0 0 1px; }
.docktabs span { height: 32px; line-height: 29px; text-align: center; border: 1px solid; border-color: #696969 #696969 #696969 #fff; box-shadow: inset -1px -1px #a0a0a0; }
.docktabs .cur { width: 178px; height: 34px; border-color: #efefef #696969 #696969 #fff; box-shadow: inset 0 -1px #a0a0a0; line-height: 31px; }
.docktabs .t2 { width: 204px; }
.docktabs .t3 { width: 77px; margin-left: 1px; }

.center { flex: 1; margin-left: 10px; border-left: 1px solid #696969; border-right: 1px solid #696969; border-bottom: 1px solid #696969; display: flex; flex-direction: column; }
.tabs { height: 40px; flex: none; display: flex; border-bottom: 1px solid #fff; border-left: 1px solid #a0a0a0; padding-left: 10px; }
.newtab { width: 24px; height: 22px; margin-top: 10px; }
.tab { display: flex; align-items: center; width: 252px; margin: 1px 0 0 5px; padding-left: 22px; border-left: 1px solid #fff; border-top: 1px solid #fff; border-right: 2px solid #808080; font-size: 22px; letter-spacing: -.6px; }
.tab > svg { width: 32px; height: 32px; }
.tab span { margin: -2px 0 0 3px; white-space: nowrap; }
.tab .close { width: 14px; height: 14px; margin: -1px 0 0 12px; }
.view { margin: 1px 2px 2px 3px; height: 1673px; border: 1px solid; border-color: #696969 #e3e3e3 #e3e3e3 #696969; box-shadow: -1px -1px #a0a0a0; display: grid; grid-template-columns: 1fr 34px; grid-template-rows: 1fr 34px; background: #fff; }
.canvas { position: relative; overflow: hidden; background: #fff; }
.canvas-v .thumb { height: 897px; margin-top: 208px; }
.hbar .thumb { width: 1320px; height: 34px; margin-left: 408px; }
.corner { background: #efefef; }

.links { position: absolute; left: 0; top: 0; width: 2683px; height: 1636px; }
.uml { position: absolute; background: #ff0; border: 1.500px solid #ff2810; font: 49px/56px "Liberation Sans", Arial, sans-serif; letter-spacing: .66px; white-space: nowrap; }
.uml h3 { font-weight: bold; text-align: center; letter-spacing: 1.300px; line-height: 54px; height: 56px; border-bottom: 1.500px solid #ff2810; }
.uml p { padding-left: 9px; height: 56.250px; margin-top: -3px; margin-bottom: 3px; }
.uml .k { letter-spacing: .45px; }
.uml .c { letter-spacing: .55px; }
.uml .w { letter-spacing: .8px; }
.ops { border-top: 1.500px solid #ff2810; margin-top: -1px; }
.voter { left: 577px; top: 180px; width: 556px; height: 283px; }
.candidate { left: 1443px; top: 140px; width: 725px; height: 339px; }
.admin { left: 630px; top: 754px; width: 556px; height: 226px; }
.server { left: 1497px; top: 659px; width: 681px; height: 339px; }
.result { left: 1523px; top: 1213px; width: 709px; height: 283px; }
.h { position: absolute; width: 8px; height: 8px; background: #00f; }
.tl { left: 0; top: 0; }
.tr { right: 0; top: 0; }
.bl { left: 0; bottom: 0; }
.grip { position: absolute; right: 0; bottom: 0; width: 24px; height: 24px; }

.status { height: 37px; flex: none; display: flex; padding-top: 2px; background: #efefef; }
.cell { height: 34px; border: 1px solid; border-color: #a0a0a0 #fff #fff #a0a0a0; line-height: 36px; }
.name { width: 146px; padding-left: 1px; letter-spacing: -.45px; white-space: nowrap; }
.zoom { margin-left: 1439px; width: 1438px; display: flex; justify-content: flex-end; letter-spacing: .6px; }
.pct { margin-right: 7px; }
.fit { width: 128px; display: flex; align-items: center; justify-content: space-between; padding: 0 8px 0 10px; border: 1px solid; border-color: #fff #696969 #696969 #fff; box-shadow: inset -1px -1px #a0a0a0; }
.fit i { width: 1px; height: 20px; background: #a0a0a0; }
.mag { width: 33px; margin-left: 3px; padding: 1px 0 0 6px; }
.mag svg { width: 24px; height: 30px; }
.slider { width: 103px; margin-left: 3px; padding-left: 32px; background: linear-gradient(#808080 0 2px, #fff 2px 3px) 2px 15px / 98px 3px no-repeat; }
.slider i { display: block; width: 22px; height: 32px; background: #efefef; border: 1px solid; border-color: #fff #696969 #696969 #fff; }

.taskbar { height: 96px; display: grid; grid-template-columns: 896px 1408px 896px; color: #fff; background: linear-gradient(90deg, #162631 0, #22221f 85px, #22221f 140px, #10283a 215px, #10283a 260px, #1e2126 320px, #202020 1150px, #172531 1290px, #202020 1400px, #1c2228 1680px, #22221f 1770px, #1c232a 1920px, #202020 2200px, #202224 2560px, #132638 2630px, #1c222a 2750px, #222022 2900px, #222022 2990px, #132a3a 3100px, #122a3a 3200px); }
.weather { display: flex; align-items: center; padding-left: 40px; gap: 14px; }
.weather > svg { width: 44px; height: 38px; margin-top: -3px; }
.weather div, .lang, .clock { display: flex; flex-direction: column; }
.dim { color: #c4c8ca; letter-spacing: -.25px; }
.apps { display: flex; }
.apps span { width: 88px; display: flex; align-items: center; justify-content: center; position: relative; }
.apps svg { width: 48px; height: 48px; overflow: visible; }
.dev, .pc { font-family: "Noto Sans", sans-serif; font-weight: bold; fill: #fff; }
.dev { font-size: 21px; text-anchor: middle; }
.cpp { fill: #0a3c80; }
.pc { font-size: 17px; }
.run::after, .focus::after { content: ""; position: absolute; bottom: 10px; width: 12px; height: 6px; border-radius: 3px; background: #9a9a9a; }
.focus::after { width: 32px; background: #f37f66; }
.focus::before { content: ""; position: absolute; left: 4px; top: 8px; width: 80px; height: 80px; border-radius: 8px; background: rgba(255, 255, 255, .06); border: 1px solid rgba(255, 255, 255, .1); }
.tray { display: flex; align-items: center; padding-left: 315px; }
.chev { width: 26px; height: 14px; }
.kbd { width: 32px; height: 24px; margin-left: 27px; }
.lang { width: 48px; margin-left: 36px; text-align: center; letter-spacing: .6px; }
.wifi { width: 32px; height: 24px; margin-left: 36px; }
.vol { width: 31px; height: 24px; margin-left: 16px; }
.bat { width: 32px; height: 22px; margin-left: 17px; }
.clock { width: 155px; margin-top: -2px; text-align: right; }
.date { letter-spacing: .6px; }
.badge { width: 40px; height: 32px; margin-left: 19px; border-radius: 16px; background: #f37f66; color: #111; text-align: center; line-height: 32px; font-size: 21px; }
```
